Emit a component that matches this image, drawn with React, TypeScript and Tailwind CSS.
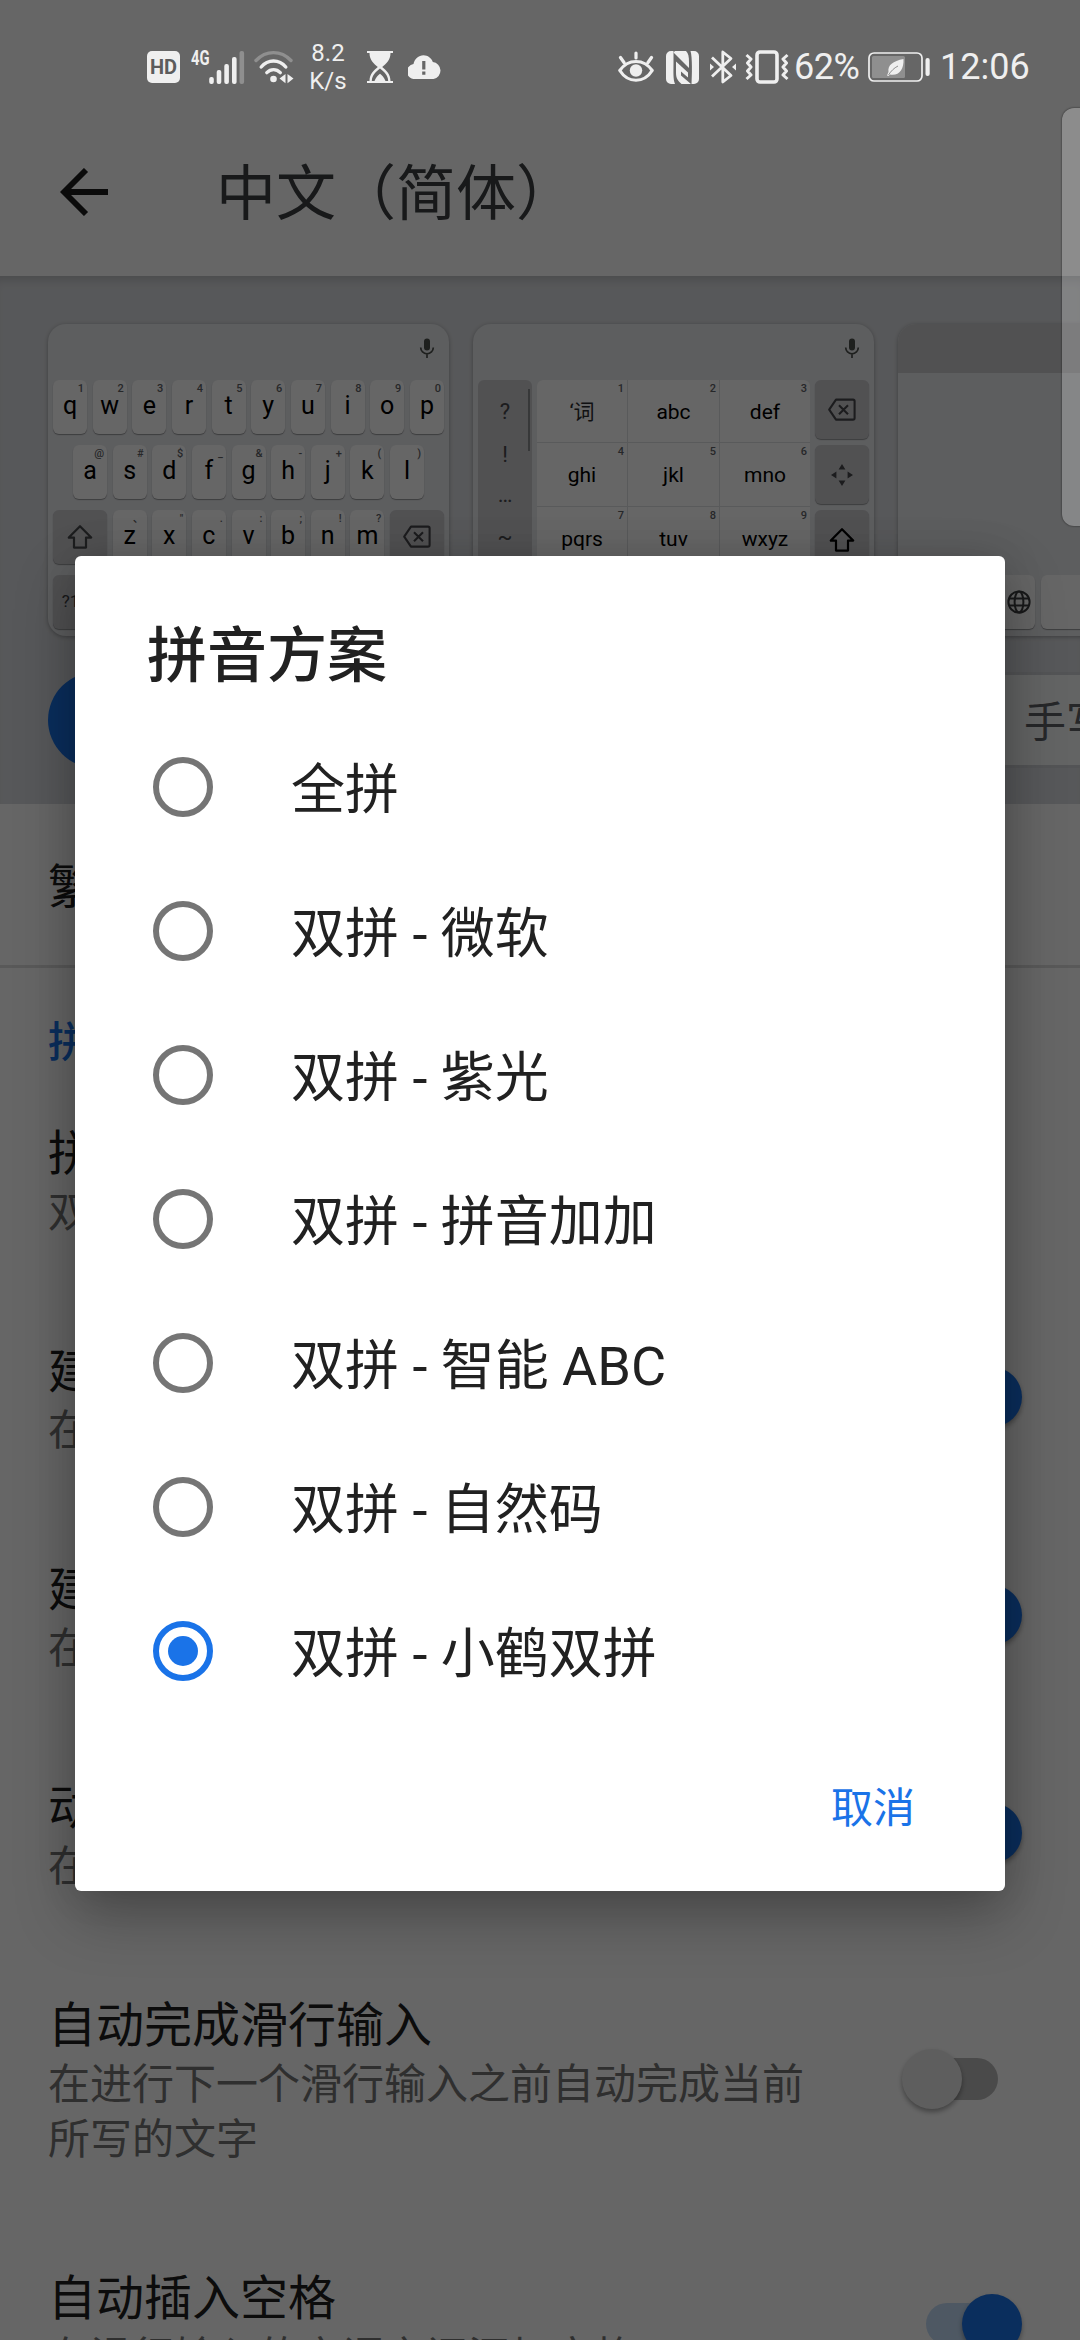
import React from 'react';

const OPTIONS = [
  '全拼',
  '双拼 - 微软',
  '双拼 - 紫光',
  '双拼 - 拼音加加',
  '双拼 - 智能 ABC',
  '双拼 - 自然码',
  '双拼 - 小鹤双拼',
];

const ROW1 = [['q', '1'], ['w', '2'], ['e', '3'], ['r', '4'], ['t', '5'], ['y', '6'], ['u', '7'], ['i', '8'], ['o', '9'], ['p', '0']];
const ROW2 = [['a', '@'], ['s', '#'], ['d', '$'], ['f', '_'], ['g', '&'], ['h', '-'], ['j', '+'], ['k', '('], ['l', ')']];
const ROW3 = [['z', '、'], ['x', '"'], ['c', '.'], ['v', ':'], ['b', ';'], ['n', '!'], ['m', '?']];
const CELLS = ['‘词', 'abc', 'def', 'ghi', 'jkl', 'mno', 'pqrs', 'tuv', 'wxyz'];

function MicIcon() {
  return (
    <svg viewBox="0 0 16 20" className="h-5 w-4" fill="none">
      <rect x="5" y="0.5" width="6" height="12" rx="3" fill="#4d504d" />
      <path d="M1.7 9.5a6.3 6.3 0 0 0 12.6 0M8 15.8V20" stroke="#4d504d" strokeWidth="1.7" />
    </svg>
  );
}

function ShiftIcon({ dark }: { dark?: boolean }) {
  return (
    <svg viewBox="0 0 26 26" className="h-[26px] w-[26px]" fill="none" stroke={dark ? '#000' : '#4a4b4f'} strokeWidth="2.2" strokeLinejoin="round">
      <path d="M13 2.2 1.8 13.6H7V23.6H19V13.6H24.2Z" />
    </svg>
  );
}

function DeleteIcon() {
  return (
    <svg viewBox="0 0 28 24" className="h-6 w-7" fill="none" stroke="#47484b" strokeWidth="2.1" strokeLinejoin="round">
      <path d="M8 1.6H25a1.6 1.6 0 0 1 1.6 1.6V20a1.6 1.6 0 0 1-1.6 1.6H8L1.2 11.6ZM11 7.2l9 9M20 7.2l-9 9" />
    </svg>
  );
}

function Key({ label, hint }: { label: string; hint: string }) {
  return (
    <div className="relative h-[54px] w-[34px] shrink-0 rounded-[6px] bg-white text-center text-[25px] leading-[51px] text-black shadow-[0_1px_1px_rgba(0,0,0,0.35)]">
      {label}
      <span className="absolute right-[3px] top-0.5 text-[11px] leading-[13px] font-medium text-[#5f6368]">{hint}</span>
    </div>
  );
}

function FnKey({ className, children }: { className?: string; children?: React.ReactNode }) {
  return (
    <div className={`flex w-[54px] shrink-0 items-center justify-center rounded-[6px] bg-[#cacace] shadow-[0_1px_1px_rgba(0,0,0,0.35)] ${className ?? ''}`}>
      {children}
    </div>
  );
}

function Card({ children }: { children?: React.ReactNode }) {
  return (
    <div className="h-[312px] w-[401px] shrink-0 overflow-hidden rounded-[18px] bg-[#e8eaed] shadow-[0_1px_4px_rgba(0,0,0,0.3)]">
      {children}
    </div>
  );
}

function QwertyCard() {
  return (
    <Card>
      <div className="flex h-[56px] items-start justify-end pr-3.5 pt-3.5"><MicIcon /></div>
      <div className="flex flex-col gap-[11px] px-[5px]">
        <div className="flex justify-between">{ROW1.map(([a, b]) => <Key key={a} label={a} hint={b} />)}</div>
        <div className="flex justify-between px-5">{ROW2.map(([a, b]) => <Key key={a} label={a} hint={b} />)}</div>
        <div className="flex justify-between">
          <FnKey className="h-[54px]"><ShiftIcon /></FnKey>
          {ROW3.map(([a, b]) => <Key key={a} label={a} hint={b} />)}
          <FnKey className="h-[54px]"><DeleteIcon /></FnKey>
        </div>
        <div className="flex gap-1.5">
          <FnKey className="h-[54px] text-[17px] text-[#3c4043]">?123</FnKey>
          <div className="h-[54px] grow rounded-[6px] bg-white" />
        </div>
      </div>
    </Card>
  );
}

function NineKeyCard() {
  return (
    <Card>
      <div className="flex h-[56px] items-start justify-end pr-3.5 pt-3.5"><MicIcon /></div>
      <div className="flex justify-between px-[5px]">
        <div className="relative flex h-[184px] w-[54px] flex-col items-center rounded-[6px] bg-[#cacace] text-[22px] text-[#47484b]">
          <span className="mt-[10px] h-[43px] leading-[43px]">?</span>
          <span className="h-[43px] leading-[43px]">!</span>
          <span className="h-[38px] leading-[38px]">…</span>
          <span className="h-[40px] leading-[46px]">~</span>
          <div className="absolute right-0.5 top-[9px] h-[62px] w-0.5 bg-[#8b8c90]" />
        </div>
        <div className="grid h-[189px] w-[273px] grid-cols-[90px_91px_90px] grid-rows-3 gap-px overflow-hidden rounded-[6px] bg-[#dfe1e3]">
          {CELLS.map((c, i) => (
            <div key={c} className={`relative bg-white text-center text-[21px] leading-[64px] ${i === 0 ? 'text-[#2b2c2e]' : 'text-black'}`}>
              {c}
              <span className="absolute right-[3px] top-0.5 text-[11px] leading-[13px] font-medium text-[#5f6368]">{i + 1}</span>
            </div>
          ))}
        </div>
        <div className="flex flex-col gap-1.5">
          <FnKey className="h-[59px]"><DeleteIcon /></FnKey>
          <FnKey className="h-[59px]">
            <svg viewBox="0 0 24 24" className="h-6 w-6" fill="#47484b">
              <path d="M12 1l3.4 5.4H8.6ZM12 23l3.4-5.4H8.6ZM1 12l5.4-3.4v6.8ZM23 12l-5.4-3.4v6.8Z" />
            </svg>
          </FnKey>
          <FnKey className="h-[59px]"><ShiftIcon dark /></FnKey>
        </div>
      </div>
    </Card>
  );
}

function HandwritingCard() {
  return (
    <Card>
      <div className="h-[49px] bg-[#cbcbcd]" />
      <div className="h-[202px]" />
      <div className="flex gap-1.5 pl-[75px]">
        <div className="flex h-[54px] w-[62px] items-center justify-end rounded-[6px] bg-white pr-1 shadow-[0_1px_1px_rgba(0,0,0,0.35)]">
          <svg viewBox="0 0 24 24" className="h-6 w-6" fill="none" stroke="#3f4042" strokeWidth="2">
            <circle cx="12" cy="12" r="10.6" />
            <ellipse cx="12" cy="12" rx="4.4" ry="10.6" />
            <path d="M2.2 8.4h19.6M2.2 15.6h19.6" />
          </svg>
        </div>
        <div className="h-[54px] w-[200px] rounded-[6px] bg-white shadow-[0_1px_1px_rgba(0,0,0,0.35)]" />
      </div>
    </Card>
  );
}

function Toggle({ on }: { on: boolean }) {
  return (
    <div className="relative mr-[58px] h-[60px] w-[120px] shrink-0">
      <div className={`absolute left-6 top-[9px] h-[42px] w-[72px] rounded-full ${on ? 'bg-[#c3dcf7]' : 'bg-[#b9b9b9]'}`} />
      <div className={`absolute top-0 h-[60px] w-[60px] rounded-full shadow-[0_3px_5px_rgba(0,0,0,0.35)] ${on ? 'right-0 bg-[#1a73e8]' : 'left-0 bg-[#ececec]'}`} />
    </div>
  );
}

function Setting({ title, lines, toggle }: { title: string; lines: string[]; toggle?: boolean }) {
  return (
    <div className="flex items-center justify-between py-12 pl-12">
      <div className="pt-[5px]">
        <div className="h-[62px] whitespace-nowrap text-[48px] leading-[62px] text-[#202020]">{title}</div>
        {lines.map((l) => (
          <div key={l} className="h-[55px] whitespace-nowrap text-[42px] leading-[55px] text-[#757575]">{l}</div>
        ))}
      </div>
      {toggle !== undefined && <Toggle on={toggle} />}
    </div>
  );
}

function StatusBar() {
  return (
    <div className="absolute left-0 top-0 flex h-[134px] w-full items-center text-[#efefef]">
      <div className="ml-[147px] flex h-8 w-[33px] items-center justify-center rounded-[5px] bg-[#efefef] text-[20px] font-bold leading-8 text-[#5c5c5c]">HD</div>
      <svg viewBox="0 0 55 36" className="ml-2.5 h-9 w-[55px] overflow-visible" fill="currentColor">
        <text x="1" y="16" fontSize="20.5" fontWeight="700" fontFamily="Roboto, sans-serif" textLength="18.5" lengthAdjust="spacingAndGlyphs">4G</text>
        <rect x="19.2" y="28" width="4.6" height="7" rx="2" />
        <rect x="26.7" y="21" width="4.6" height="14" rx="2" />
        <rect x="34.3" y="15" width="4.6" height="20" rx="2" />
        <rect x="42" y="8" width="4.6" height="27" rx="2" />
        <rect x="49.500" y="2" width="4.6" height="33" rx="2" opacity=".3" />
      </svg>
      <svg viewBox="0 0 40 34" className="ml-[9px] h-[34px] w-10" fill="none" stroke="currentColor" strokeWidth="3.4" strokeLinecap="round">
        <path d="M2 10.500C12 0 27 0 37 10.500" opacity=".3" />
        <path d="M7.200 17C14 9 25 9 31.800 17M12.800 22.600c4-4 9.500-4 13.500 0" />
        <circle cx="19.500" cy="29" r="3.3" fill="currentColor" stroke="none" />
        <path d="M25.500 28.600 31.500 24v9.200ZM39.500 28.600 33.500 24v9.200Z" fill="currentColor" stroke="none" />
      </svg>
      <div className="ml-[14px] w-[40px] text-center text-[24px] leading-[28px]">8.2<br />K/s</div>
      <svg viewBox="0 0 26 32" className="ml-[19px] h-8 w-[26px]" fill="currentColor">
        <path d="M0 0h26v2H23.5C23.5 9 19 13 15.2 16 19 19 23.5 23 23.5 30H26v2H0v-2H2.5C2.5 23 7 19 10.8 16 7 13 2.5 9 2.5 2H0ZM13 17.6C9 21 5 24 4.8 30H7.5C9 26.5 11 24 13 22.7 15 24 17 26.5 18.5 30H21.2C21 24 17 21 13 17.6Z" fillRule="evenodd" />
      </svg>
      <svg viewBox="0 0 34 24" className="ml-[15px] h-6 w-[34px]" fill="currentColor">
        <path fillRule="evenodd" d="M7.5 24A7.4 7.4 0 0 1 5.5 9C6.5 3.8 10.6.2 15.5.2c4.3 0 8 2.8 9.3 6.8A8.6 8.6 0 0 1 25.5 24ZM14.2 6v8.5h3.2V6ZM14.2 16.6v3.2h3.2v-3.2Z" />
      </svg>
      <div className="grow" />
      <svg viewBox="0 0 36 32" className="h-8 w-9" fill="none" stroke="currentColor" strokeWidth="3.2" strokeLinecap="round">
        <path d="M1.8 19.5C10 7.5 26 7.5 34.2 19.5 26 32.5 10 32.5 1.8 19.5ZM18 2v5M2.5 6.5 6 11.5M33.5 6.5 30 11.5" strokeLinejoin="round" />
        <circle cx="18" cy="19.5" r="6.2" fill="currentColor" stroke="none" />
      </svg>
      <svg viewBox="0 0 33 33" className="ml-3 h-[33px] w-[33px]" fill="currentColor">
        <path d="M5 0H7.500V12C7.500 21 7 28 9 33H5A5 5 0 0 1 0 28V5A5 5 0 0 1 5 0Z" />
        <path d="M9 0H20C22.500 2.500 23 6 23 11V17L7.500 1.500Z" />
        <path d="M10 10.500 22 21.500V26.500L15 20.500V24.500L25 33H15.500C12 30 10 27 10 22Z" />
        <path d="M24.500 0H28A5 5 0 0 1 33 5V28A5 5 0 0 1 28 33H25.500C26 25 26.500 6 24.500 0Z" />
      </svg>
      <svg viewBox="0 0 28 36" className="ml-2.5 h-9 w-7" fill="none" stroke="currentColor" strokeWidth="2.8">
        <path d="M3 8.500 22 26.500 13.800 33V3L22 9.500 3 27.500" strokeLinejoin="round" />
        <path d="M1 14.500 5 18l-4 3.500ZM27 14.500 23 18l4 3.500Z" fill="currentColor" stroke="none" />
      </svg>
      <svg viewBox="0 0 44 34" className="ml-2 h-[34px] w-11" fill="none" stroke="currentColor" strokeWidth="3">
        <rect x="12" y="2" width="20" height="30" rx="3" strokeWidth="3.600" />
        <path d="M1.500 5 6 9 2.500 13 6 17 2.500 21 6 25 1.500 29M42.500 5 38 9l3.500 4L38 17l3.500 4L38 25l4.500 4" strokeLinejoin="round" />
      </svg>
      <span className="ml-[5px] w-[68px] whitespace-nowrap text-[36px] leading-[40px] tracking-[-0.5px]">62%</span>
      <svg viewBox="0 0 62 30" className="ml-[6px] h-[30px] w-[62px]" fill="none">
        <rect x="1" y="1" width="53" height="28" rx="5" stroke="#efefef" strokeWidth="1.700" />
        <rect x="4" y="4" width="33" height="22" rx="1.500" fill="#8f8f8f" />
        <path d="M35.500 7C25 9 19.500 13 20.500 20L19 23.500 20.500 24 22 22.500C31 24 36 18 35.500 7Z" fill="#efefef" />
        <path d="M20.500 23C23 19 26 16 30 14" stroke="#8f8f8f" strokeWidth="1" />
        <rect x="57.500" y="6" width="4.200" height="18" rx="2" fill="#efefef" />
      </svg>
      <span className="ml-[10px] mr-[49px] w-[91px] whitespace-nowrap text-[36px] leading-[40px]">12:06</span>
    </div>
  );
}

export default function App() {
  return (
    <div className="relative h-[2340px] w-[1080px] overflow-hidden bg-white font-['Roboto','Noto_Sans_CJK_SC',sans-serif]">
      <div className="flex h-[276px] items-center bg-white pt-[108px] pl-[60px]">
        <svg viewBox="0 0 48 48" className="h-12 w-12" fill="none" stroke="#1c1c1c" strokeWidth="5.800">
          <path d="M48 24H5M26 2 4 24 26 46" />
        </svg>
        <h1 className="ml-[108px] pt-[5px] text-[60px] leading-[70px] text-[#3c4043]">中文（简体）</h1>
      </div>
      <div className="h-[528px] bg-[#dadce0] pl-12 pt-12 shadow-[inset_0_10px_10px_-6px_rgba(0,0,0,0.15)]">
        <div className="flex gap-6">
          <QwertyCard />
          <NineKeyCard />
          <HandwritingCard />
        </div>
        <div className="mt-9 flex gap-6">
          <div className="h-24 w-[401px] shrink-0 rounded-full bg-[#1a73e8]" />
          <div className="h-24 w-[401px] shrink-0 rounded-full bg-white" />
          <div className="h-24 w-[401px] shrink-0 rounded-full border-[3px] border-[#d0d2d6] bg-[#f8f9fa] pl-[123px] text-[42px] leading-[96px] text-[#5f6368]">手写</div>
        </div>
      </div>
      <div className="h-[164px] border-b-[3px] border-[#dedede] pl-12 text-[48px] leading-[168px] text-[#202020]">繁体中文</div>
      <div className="h-[102px] pl-12 pt-[48px] text-[42px] font-medium leading-[54px] text-[#1a73e8]">拼音</div>
      <Setting title="拼音方案" lines={['双拼 - 小鹤双拼']} />
      <Setting title="建议联系人姓名" lines={['在输入时显示联系人姓名']} toggle={true} />
      <Setting title="建议表情符号" lines={['在输入时显示表情符号']} toggle={true} />
      <Setting title="动态建议" lines={['在输入时显示动态建议']} toggle={true} />
      <Setting title="自动完成滑行输入" lines={['在进行下一个滑行输入之前自动完成当前', '所写的文字']} toggle={false} />
      <Setting title="自动插入空格" lines={['在滑行输入的字词之间添加空格']} toggle={true} />

      <div className="absolute inset-0 bg-black/60" />
      <StatusBar />
      <div className="absolute -right-3 top-[108px] h-[418px] w-[30px] rounded-xl bg-white/25 shadow-[0_0_2px_rgba(0,0,0,0.7)]" />

      <div className="absolute left-[75px] top-[556px] flex h-[1335px] w-[930px] flex-col rounded-[6px] bg-white shadow-[0_24px_60px_rgba(0,0,0,0.28),0_0_40px_rgba(0,0,0,0.12)]">
        <h2 className="h-[159px] pl-[72px] pt-[66px] text-[60px] font-medium leading-[70px] text-[#212121]">拼音方案</h2>
        {OPTIONS.map((o, i) => (
          <div key={o} className="flex h-36 items-center pl-[78px]">
            {i === OPTIONS.length - 1 ? (
              <span className="flex h-[60px] w-[60px] items-center justify-center rounded-full border-[6px] border-[#1a73e8]">
                <span className="h-[30px] w-[30px] rounded-full bg-[#1a73e8]" />
              </span>
            ) : (
              <span className="h-[60px] w-[60px] rounded-full border-[6px] border-[#757575]" />
            )}
            <span className="ml-[78px] pt-2 text-[54px] leading-[64px] text-[#212121]">{o}</span>
          </div>
        ))}
        <div className="flex grow items-center justify-end pr-[90px] pt-1">
          <span className="text-[42px] leading-[50px] text-[#1a73e8]">取消</span>
        </div>
      </div>
    </div>
  );
}
